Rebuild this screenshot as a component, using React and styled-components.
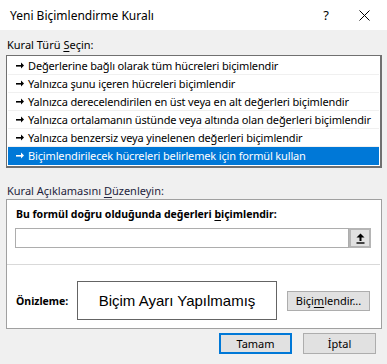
import React from "react";
import styled, { createGlobalStyle } from "styled-components";

const Global = createGlobalStyle`
  html, body { margin: 0; padding: 0; background: #f0f0f0; }
  body { font-family: "Noto Sans", "Open Sans", sans-serif; font-size: 11px; color: #000; }
`;

const Window = styled.div`
  width: 387px;
  height: 364px;
  background: #f0f0f0;
  display: flex;
  flex-direction: column;
  overflow: hidden;
`;

const TitleBar = styled.div`
  height: 30px;
  background: #fff;
  display: flex;
  align-items: center;
  padding-left: 10px;
  flex-shrink: 0;
`;

const TitleText = styled.div`
  flex: 1;
  font-size: 12px;
`;

const TitleButton = styled.div`
  width: ${p => p.$w}px;
  display: flex;
  justify-content: center;
  align-items: center;
  font-size: 13px;
`;

const Body = styled.div`
  padding: 7px 5px 0 6px;
  display: flex;
  flex-direction: column;
`;

const Label = styled.div`
  height: 16px;
  line-height: 16px;
  padding-left: 1px;
  margin-top: ${p => p.$mt || 0}px;
  color: ${p => p.$color || "#000"};
`;

const ListBox = styled.div`
  margin-top: 2px;
  background: #fff;
  border-style: solid;
  border-color: #707070;
  border-width: 1px 2px 2px 1px;
  padding: 1px;
`;

const Row = styled.div`
  height: 18px;
  box-sizing: border-box;
  display: flex;
  align-items: center;
  padding-left: 8px;
  gap: 3px;
  letter-spacing: -0.15px;
  border-bottom: 1px solid ${p => (p.$selected ? "#0078d7" : "#f0f0f0")};
  background: ${p => (p.$selected ? "#0078d7" : "#fff")};
  color: ${p => (p.$selected ? "#fff" : "#000")};
  white-space: nowrap;
  overflow: hidden;
  svg { flex-shrink: 0; }
`;

const Group = styled.div`
  background: #fff;
  border: 1px solid #a0a0a0;
  height: 130px;
  box-sizing: border-box;
  display: flex;
  flex-direction: column;
`;

const BoldLabel = styled.div`
  font-weight: bold;
  font-size: 10.5px;
  height: 16px;
  line-height: 16px;
  white-space: nowrap;
`;

const Section = styled.div`
  padding: 6px 10px 0 9px;
  display: flex;
  flex-direction: column;
  gap: 6px;
`;

const InputRow = styled.div`
  display: flex;
  margin-left: -1px;
  height: 20px;
`;

const TextInput = styled.div`
  flex: 1;
  border: 1px solid #adadad;
  background: #fff;
`;

const PickButton = styled.div`
  width: 22px;
  box-sizing: border-box;
  border: 2px solid #b5b5b5;
  background: #e1e1e1;
  display: flex;
  align-items: center;
  justify-content: center;
`;

const Separator = styled.div`
  height: 1px;
  background: #d9d9d9;
  margin: 16px 1px 0 0;
`;

const PreviewRow = styled.div`
  margin-top: 16px;
  display: flex;
  align-items: center;
  padding-left: 9px;
`;

const PreviewLabel = styled(BoldLabel)`
  width: 61px;
`;

const PreviewBox = styled.div`
  width: 200px;
  height: 39px;
  box-sizing: border-box;
  border: 1px solid #646464;
  display: flex;
  align-items: center;
  justify-content: center;
  font-family: "Liberation Sans", Arial, sans-serif;
  font-size: 15px;
`;

const Button = styled.div`
  width: ${p => p.$w}px;
  height: ${p => p.$h || 21}px;
  box-sizing: border-box;
  background: #e1e1e1;
  border: ${p => (p.$primary ? "2px solid #0078d7" : "1px solid #adadad")};
  display: flex;
  align-items: center;
  justify-content: center;
  margin-left: ${p => p.$ml || 0}px;
`;

const ButtonRow = styled.div`
  display: flex;
  justify-content: flex-end;
  gap: 11px;
  padding-right: 6px;
  margin-top: 4px;
`;

const U = styled.span`
  text-decoration: underline;
  text-underline-offset: 2px;
`;

const RuleIcon = ({ color }) => (
  <svg width="9" height="7" viewBox="0 0 9 7">
    <rect x="0" y="3" width="6" height="1.6" fill={color} />
    <path d="M5 0.5 L8 3.5 L5 6.5 Z" fill={color} />
  </svg>
);

const UpIcon = () => (
  <svg width="9" height="11" viewBox="0 0 9 11">
    <path d="M4.5 0.5 L8.5 4.5 L5.5 4.5 L5.5 8 L3.5 8 L3.5 4.5 L0.5 4.5 Z" fill="#000" />
    <rect x="0.5" y="9.3" width="8" height="1.4" fill="#000" />
  </svg>
);

const CloseIcon = () => (
  <svg width="11" height="11" viewBox="0 0 11 11">
    <path d="M0.5 0.5 L10.5 10.5 M10.5 0.5 L0.5 10.5" stroke="#000" strokeWidth="1" />
  </svg>
);

const rules = [
  "Değerlerine bağlı olarak tüm hücreleri biçimlendir",
  "Yalnızca şunu içeren hücreleri biçimlendir",
  "Yalnızca derecelendirilen en üst veya en alt değerleri biçimlendir",
  "Yalnızca ortalamanın üstünde veya altında olan değerleri biçimlendir",
  "Yalnızca benzersiz veya yinelenen değerleri biçimlendir",
  "Biçimlendirilecek hücreleri belirlemek için formül kullan",
];

export default function App() {
  return (
    <>
      <Global />
      <Window>
        <TitleBar>
          <TitleText>Yeni Biçimlendirme Kuralı</TitleText>
          <TitleButton $w={30}>?</TitleButton>
          <TitleButton $w={46}><CloseIcon /></TitleButton>
        </TitleBar>
        <Body>
          <Label>Kural Türü <U>S</U>eçin:</Label>
          <ListBox>
            {rules.map((r, i) => {
              const sel = i === rules.length - 1;
              return (
                <Row key={i} $selected={sel}>
                  <RuleIcon color={sel ? "#fff" : "#000"} />
                  <span>{r}</span>
                </Row>
              );
            })}
          </ListBox>
          <Label $mt={15} $color="#1e1e3c">Kural Açıklamasını <U>D</U>üzenleyin:</Label>
          <Group>
            <Section>
              <BoldLabel>Bu formül doğru olduğunda değerleri <U>b</U>içimlendir:</BoldLabel>
              <InputRow>
                <TextInput />
                <PickButton><UpIcon /></PickButton>
              </InputRow>
            </Section>
            <Separator />
            <PreviewRow>
              <PreviewLabel>Önizleme:</PreviewLabel>
              <PreviewBox>Biçim Ayarı Yapılmamış</PreviewBox>
              <Button $w={83} $h={20} $ml={10}>Biçi<U>m</U>lendir...</Button>
            </PreviewRow>
          </Group>
          <ButtonRow>
            <Button $w={73} $primary>Tamam</Button>
            <Button $w={73}>İptal</Button>
          </ButtonRow>
        </Body>
      </Window>
    </>
  );
}
